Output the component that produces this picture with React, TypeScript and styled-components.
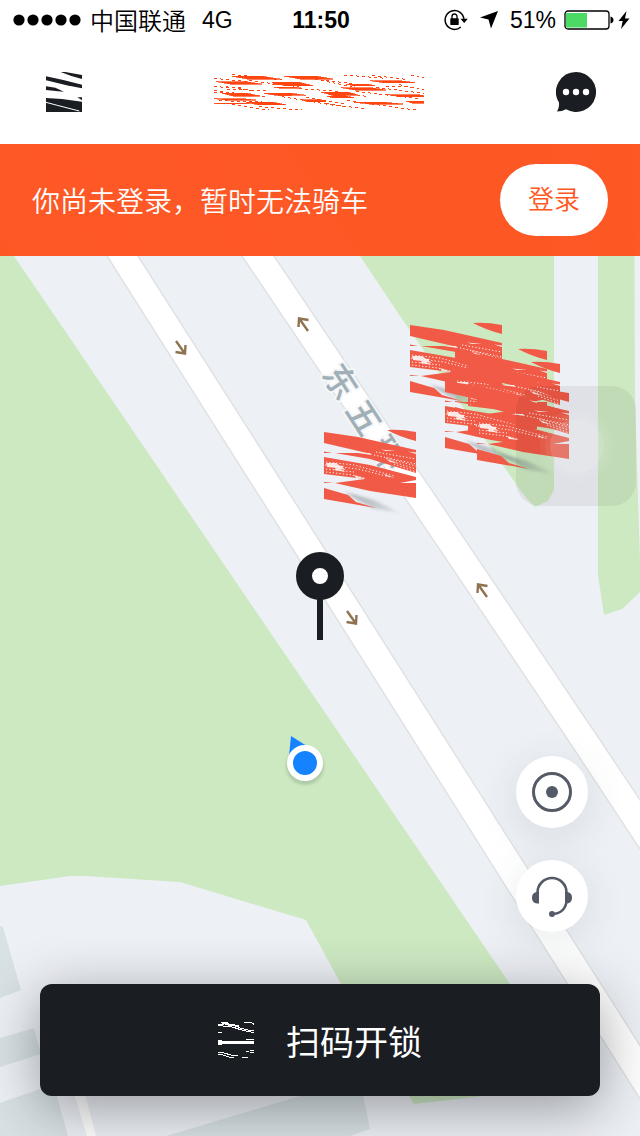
import React from 'react';
import styled, { createGlobalStyle } from 'styled-components';

const ink = '#1a1d22';
const orange = '#ff5722';
const slate = '#555b66';
const flag = '#f15a46';
const block = '#d8e1e4';
const meadow = '#cde9c2';

const GlobalStyle = createGlobalStyle`
  * { box-sizing: border-box; }
  body {
    margin: 0;
    color: #000;
    font-family: "Liberation Sans", "Noto Sans CJK SC", sans-serif;
  }
  button { font: inherit; border: 0; padding: 0; cursor: pointer; }
  svg { display: block; flex: none; }
`;

const Page = styled.div`
  min-height: 100vh;
  display: flex;
  flex-direction: column;
  background: #fff;
`;

const StatusBar = styled.div`
  display: grid;
  grid-template-columns: 1fr auto 1fr;
  align-items: center;
  height: 40px;
  padding: 0 10px 0 12px;
  font-size: 23px;
  line-height: 40px;
`;

const StatusGroup = styled.div<{ $end?: boolean }>`
  display: flex;
  align-items: center;
  justify-content: ${(p) => (p.$end ? 'flex-end' : 'flex-start')};
  gap: ${(p) => (p.$end ? 12 : 8)}px;
`;

const PowerGroup = styled.div`
  display: flex;
  align-items: center;
  gap: 8px;
`;

const PowerIcons = styled.div`
  display: flex;
  align-items: center;
  gap: 4px;
`;

const Carrier = styled.span`
  font-family: "Noto Sans CJK SC", sans-serif;
  font-size: 24px;
  font-weight: 350;
  margin-right: 8px;
`;

const Clock = styled.time`
  font-weight: 700;
`;

const NavBar = styled.header`
  display: flex;
  align-items: center;
  justify-content: space-between;
  height: 104px;
  padding: 0 44px 0 46px;
`;

const IconButton = styled.button`
  background: transparent;
`;

const Title = styled.h1`
  margin: 0;
`;

const MapArea = styled.main`
  position: relative;
  flex: 1;
  display: flex;
  flex-direction: column;
  min-height: 992px;
  overflow: hidden;
  background: #edf0f5;
`;

const MapCanvas = styled.svg`
  position: absolute;
  inset: 0;
  width: 100%;
  height: 100%;
`;

const Banner = styled.section`
  position: relative;
  display: flex;
  align-items: center;
  justify-content: space-between;
  height: 112px;
  padding: 0 32px;
  background: rgba(255, 79, 26, 0.95);
  color: #fff;
  font-family: "Noto Sans CJK SC", sans-serif;
  font-size: 28px;
  font-weight: 350;
  line-height: 40px;
`;

const BannerText = styled.p`
  margin: 0;
`;

const LoginButton = styled.button`
  width: 108px;
  height: 72px;
  padding-bottom: 4px;
  border-radius: 36px;
  background: #fff;
  color: ${orange};

  && { font-size: 26px; }
`;

const MapTools = styled.div`
  position: relative;
  display: flex;
  flex-direction: column;
  align-self: flex-end;
  gap: 32px;
  margin: auto 52px 52px 0;
`;

const RoundButton = styled.button`
  display: grid;
  place-items: center;
  width: 72px;
  height: 72px;
  border-radius: 50%;
  background: #fff;
  box-shadow: 0 8px 40px rgba(60, 80, 90, 0.12);
`;

const UnlockButton = styled.button`
  position: relative;
  display: flex;
  align-items: center;
  justify-content: center;
  gap: 32px;
  height: 112px;
  margin: 0 40px 40px;
  border-radius: 12px;
  background: ${ink};
  box-shadow: 0 12px 56px rgba(26, 29, 34, 0.42);
  color: #fff;

  && {
    font-family: "Noto Sans CJK SC", sans-serif;
    font-size: 34px;
  }
`;

const SignalDots = () => (
  <svg width="70" height="12" viewBox="0 0 70 12" aria-hidden="true">
    {[7, 21, 35, 49, 63].map((x) => (
      <circle key={x} cx={x} cy="6" r="5.6" />
    ))}
  </svg>
);

const RotationLock = () => (
  <svg width="24" height="22" viewBox="0 0 24 22" aria-hidden="true">
    <path d="M19.900 10A9.400 9.400 0 1 0 16.800 18" fill="none" stroke="#000" strokeWidth="1.500" />
    <path d="M16.500 9.700h7.300l-3.600 4.300z" />
    <rect x="6.300" y="9.300" width="8.400" height="6.600" rx=".6" />
    <path d="M8 10V7.500a2.500 2.500 0 0 1 5 0V10" fill="none" stroke="#000" strokeWidth="1.300" />
  </svg>
);

const LocationArrow = () => (
  <svg width="18" height="18" viewBox="0 0 18 18" aria-hidden="true">
    <path d="M18 0 0 6.500 8.500 8.500 11 17.500z" />
  </svg>
);

const Battery = () => (
  <svg width="50" height="20" viewBox="0 0 50 20" aria-hidden="true">
    <rect x="1" y="1" width="44" height="18" rx="3" fill="none" stroke="#000" strokeWidth="1.300" />
    <rect x="2" y="3" width="21" height="14.500" fill="#4cd964" />
    <path d="M46.500 6.500q3 1 3 3.500t-3 3.500z" />
  </svg>
);

const Bolt = () => (
  <svg width="12" height="20" viewBox="0 0 12 20" aria-hidden="true">
    <path d="M8.500 1 .5 11h4.200L3 19l8.500-10.500H7z" />
  </svg>
);

const ProfileIcon = () => (
  <svg width="36" height="40" viewBox="0 0 108 120" fill={ink} aria-hidden="true">
    <path d="M44 0h14l50 9v12L76 12z" />
    <path d="M0 13 52 24l56 14v11L62 40 0 25z" />
    <path d="M0 43 28 47l26 12-18-1L0 54z" />
    <path d="M94 76h14v9z" />
    <path d="M0 78 48 81l60 8v31H0z" />
    <path d="M0 91 34 100l66 17" fill="none" stroke="#fff" strokeWidth="3" />
  </svg>
);

const ChatIcon = () => (
  <svg width="40" height="40" viewBox="0 0 40 40" aria-hidden="true">
    <path
      d="M20 0a20 20 0 1 1-10 37.300Q6 39.500 1 39.500 3.500 36 3 30.500A20 20 0 0 1 20 0z"
      fill={ink}
    />
    {[10, 20, 30].map((x) => (
      <circle key={x} cx={x} cy="20" r="3.200" fill="#fff" />
    ))}
  </svg>
);

// Solid streaks of the title mark: start x, start y, end x, end y.
const streaks = [
  [100, 49, 242, 57], [50, 65, 188, 72], [255, 48, 402, 57], [218, 67, 342, 77],
  [225, 81, 305, 84], [70, 100, 182, 108], [195, 100, 322, 106], [46, 116, 172, 120],
  [34, 129, 150, 131], [140, 127, 262, 134], [310, 119, 382, 125], [365, 96, 482, 106],
  [385, 109, 465, 113], [426, 83, 562, 90], [440, 72, 527, 77], [512, 62, 648, 68],
  [565, 104, 700, 110], [622, 123, 700, 129], [466, 127, 612, 132], [220, 72, 330, 74],
];

// Dotted trails between the streaks, in the same order of values.
const trails = [
  [100, 43, 250, 60], [45, 55, 150, 65], [150, 62, 300, 80], [45, 92, 200, 110],
  [80, 80, 160, 92], [85, 88, 210, 92], [330, 54, 460, 80], [380, 62, 460, 70],
  [435, 45, 560, 55], [520, 46, 620, 58], [635, 46, 675, 54], [300, 86, 420, 94],
  [250, 110, 440, 142], [320, 112, 440, 132], [440, 98, 505, 110], [530, 82, 675, 100],
  [560, 78, 650, 82], [600, 74, 675, 90], [470, 94, 660, 116], [100, 134, 210, 150],
  [180, 140, 310, 150], [380, 130, 505, 148], [445, 122, 650, 150], [60, 122, 190, 126],
  [45, 98, 80, 99], [45, 80, 130, 84],
];

const TitleMark = () => (
  <svg
    width="210"
    height="36"
    viewBox="45 42 630 108"
    role="img"
    aria-label="logo"
    shapeRendering="crispEdges"
  >
    {streaks.map(([a, b, c, d], i) => (
      <path
        key={i}
        d={`M${a} ${b}L${(a + c) / 2 + 20} ${b}L${c} ${d}L${(a + c) / 2 - 20} ${d + 1}z`}
        fill="#ff4510"
        stroke="#ff4510"
        strokeWidth="2"
      />
    ))}
    {trails.map(([a, b, c, d], i) => (
      <path
        key={i}
        d={`M${a} ${b}L${c} ${d}`}
        stroke="#ff4510"
        strokeWidth="3"
        strokeDasharray="9 9"
      />
    ))}
  </svg>
);

const ScanIcon = () => (
  <svg
    width="36"
    height="36"
    viewBox="0 0 108 108"
    fill="none"
    stroke="#fff"
    strokeWidth="3"
    shapeRendering="crispEdges"
    aria-hidden="true"
  >
    <path d="M10 1h20M78 1h20l10 6M0 7h18M0 11 40 14 74 25 108 32M60 16 84 23 108 27" />
    <path d="M12 3 64 12 40 11z" strokeWidth="4" />
    <path d="M0 31h12M84 52h24M0 55h12M0 66h12M84 58h24M96 64h12" />
    <path d="M0 60h108" strokeWidth="9" />
    <path d="M0 91h12l30 9h18M0 97h10l26 9h12M72 106h18M84 88h10M96 85h12M96 91h12" />
  </svg>
);

const LocateIcon = () => (
  <svg width="40" height="40" viewBox="0 0 40 40" aria-hidden="true">
    <circle cx="20" cy="20" r="18.500" fill="none" stroke={slate} strokeWidth="3" />
    <circle cx="20" cy="20" r="6" fill={slate} />
  </svg>
);

const HeadsetIcon = () => (
  <svg width="42" height="42" viewBox="0 0 42 42" aria-hidden="true">
    <path
      d="M6.500 27V17.500a14.500 14.500 0 0 1 29 0V25C35.500 34 29 39 21 39"
      fill="none"
      stroke={slate}
      strokeWidth="2.600"
    />
    <path d="M8 17H6a5.800 5.800 0 0 0 0 11.500h2zM34 17h2a5.800 5.800 0 0 1 0 11.500h-2z" fill={slate} />
    <circle cx="21" cy="39" r="3" fill={slate} />
  </svg>
);

const flagSpots = [
  [324, 429],
  [410, 322],
  [455, 348],
  [468, 361],
  [445, 378],
  [477, 390],
];

const Flag = () => (
  <g>
    <path d="M20 63 50 71 76 84 48 79z" fill="url(#shade)" filter="url(#soft)" />
    <g fill={flag}>
      <path d="M63 1Q76 0 92 3V12Q76 8 63 1z" />
      <path d="M0 3 34 8 92 21V44L46 30 11 24 43 24 0 14z" />
      <path d="M0 22.500 8 24H0zM0 53 10 54H0z" />
      <path d="M0 28 46 36 92 48V51L76 54H92V69L46 62 11 54 41 50 0 45z" />
      <path d="M0 59 24 66 32 73 52 79 0 70z" />
    </g>
    <path d="M84 22.500 92 23.500V25zM34 24 46 24 48 26z" fill="#f6eeee" />
    <g fill="none" stroke="#fff" strokeWidth="1" strokeDasharray="1.200 2.200">
      <path d="M2 33 30 36 70 47M1 36 34 40 66 48M2 43 28 46 40 49M52 23 92 30M50 26 92 35M62 29 92 37M66 32 92 40M70 35 92 43M2 40 30 43" />
    </g>
    <g fill="#fff" opacity=".85">
      <path d="M2 34 12 34 22 41 16 40 22 43 10 41 12 39 3 38zM10 36 20 37 18 39z" />
      <path d="M30 46 42 50 32 49zM60 45 71 49 62 47z" />
      <path d="M57 20.500 72 22 62 22zM62 30 74 34 66 33z" />
    </g>
  </g>
);

const Chevron = ({ x, y, down }: { x: number; y: number; down?: boolean }) => (
  <path
    transform={`translate(${x} ${y}) rotate(${down ? 180 : 0})`}
    d="M5 7-3.500-5M5.500-4-4-5.500-4.500 3"
    fill="none"
    stroke="#8f7350"
    strokeWidth="2.400"
  />
);

const CityMap = () => (
  <MapCanvas viewBox="0 144 640 992" preserveAspectRatio="xMidYMin slice" aria-label="地图">
    <defs>
      <filter id="soft" x="-30%" y="-60%" width="160%" height="220%">
        <feGaussianBlur stdDeviation="1.500" />
      </filter>
      <linearGradient id="shade">
        <stop offset="0" stopColor="#59646a" stopOpacity=".5" />
        <stop offset="1" stopColor="#59646a" stopOpacity=".1" />
      </linearGradient>
    </defs>
    <g fill={meadow}>
      <path d="M0 235 14 256 270 632 510 984 580 1085 414 1104 341 984 306 920 180 882 85 876H70L0 886z" />
      <path d="M285 144 360 256 400 316 520 490 528 500 535 507 548 501 554 490V144z" />
      <path d="M598 144H634L635 400 638 500 640 560V592L622 609 604 615 598 575z" />
    </g>
    <g fill={block}>
      <path d="M0 926 3 927 21 990 0 998zM0 1038 34 1028 41 1054 0 1067z" />
      <path d="M0 1103 40 1089 56 1092 68 1136H0zM166 1136 300 1096 362 1090 370 1129 350 1136z" />
    </g>
    <path d="M73 1090H84L96 1136H87z" fill="#fff" />
    <g fill="#fff" stroke="#e0e2e4" strokeWidth="1.500">
      <path d="M36 144H67L138 256 319 540 700 1140H666L287 540 107 256z" />
      <path d="M167 144H199L274 256 600 740 700 890V940L568 740 242 256z" />
    </g>
    <Chevron x={181} y={348} down />
    <Chevron x={303} y={324} />
    <Chevron x={352} y={618} down />
    <Chevron x={482} y={590} />
    <text
      transform="translate(321 374) rotate(57)"
      x="0 43 86"
      y="0"
      fontFamily="Noto Sans CJK SC, sans-serif"
      fontSize="34"
      fontWeight="500"
      fill="#a1afb7"
      stroke="#f4f6f8"
      strokeWidth="4"
      paintOrder="stroke"
    >
      东五环
    </text>
    {flagSpots.map(([x, y]) => (
      <g key={x} transform={`translate(${x} ${y})`}>
        <Flag />
      </g>
    ))}
    <g>
      <rect x="516" y="386" width="120" height="120" rx="24" fill="#000" opacity=".06" />
      <circle cx="577" cy="446" r="37" fill="#fff" opacity=".05" />
      <circle cx="577" cy="446" r="32" fill="#fff" opacity=".06" />
      <circle cx="577" cy="446" r="27" fill="#fff" opacity=".12" />
    </g>
    <path d="M317 598h6v42h-6z" fill={ink} />
    <circle cx="320" cy="576" r="16" fill="#fff" stroke={ink} strokeWidth="16" />
    <circle cx="305" cy="766" r="19" fill="#40604a" opacity=".22" filter="url(#soft)" />
    <path d="M291 736 310 748 289 756z" fill="#1583ff" />
    <circle cx="305" cy="763" r="15" fill="#1583ff" stroke="#fff" strokeWidth="6" />
  </MapCanvas>
);

export default function App() {
  return (
    <Page>
      <GlobalStyle />
      <StatusBar>
        <StatusGroup>
          <SignalDots />
          <Carrier>中国联通</Carrier>
          <span>4G</span>
        </StatusGroup>
        <Clock>11:50</Clock>
        <StatusGroup $end>
          <RotationLock />
          <LocationArrow />
          <PowerGroup>
            <span>51%</span>
            <PowerIcons>
              <Battery />
              <Bolt />
            </PowerIcons>
          </PowerGroup>
        </StatusGroup>
      </StatusBar>
      <NavBar>
        <IconButton aria-label="我的">
          <ProfileIcon />
        </IconButton>
        <Title>
          <TitleMark />
        </Title>
        <IconButton aria-label="消息">
          <ChatIcon />
        </IconButton>
      </NavBar>
      <MapArea>
        <CityMap />
        <Banner>
          <BannerText>你尚未登录，暂时无法骑车</BannerText>
          <LoginButton>登录</LoginButton>
        </Banner>
        <MapTools>
          <RoundButton aria-label="定位">
            <LocateIcon />
          </RoundButton>
          <RoundButton aria-label="客服">
            <HeadsetIcon />
          </RoundButton>
        </MapTools>
        <UnlockButton>
          <ScanIcon />
          扫码开锁
        </UnlockButton>
      </MapArea>
    </Page>
  );
}
